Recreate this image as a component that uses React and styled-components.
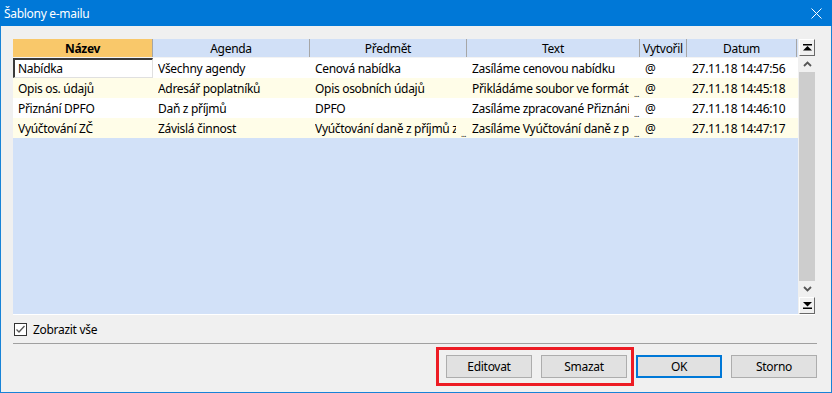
import React from "react";
import styled, { createGlobalStyle } from "styled-components";

const GlobalStyle = createGlobalStyle`
  html, body {
    margin: 0;
    padding: 0;
    background: #f0f0f0;
  }
  body {
    font-family: "Segoe UI", "Noto Sans", "Open Sans", sans-serif;
    font-size: 12px;
    letter-spacing: -0.3px;
    color: #000;
  }
`;

const Window = styled.div`
  width: 832px;
  height: 393px;
  box-sizing: border-box;
  display: flex;
  flex-direction: column;
  background: #f0f0f0;
  border: 1px solid #1883d7;
  border-top: none;
`;

const TitleBar = styled.div`
  height: 26px;
  margin: 0 -1px;
  background: #0078d7;
  color: #fff;
  display: flex;
  align-items: center;
  justify-content: space-between;
  padding: 0 0 0 4px;
  font-size: 12px;
`;

const CloseButton = styled.div`
  width: 32px;
  height: 26px;
  display: flex;
  align-items: center;
  justify-content: center;
`;

const Body = styled.div`
  flex: 1;
  display: flex;
  flex-direction: column;
  padding: 13px 16px 0 12px;
`;

const GridFrame = styled.div`
  height: 275px;
  display: flex;
  gap: 1px;
  border-bottom: 1px solid #fff;
`;

const Table = styled.div`
  flex: 1;
  display: flex;
  flex-direction: column;
  background: #d2e1f8;
`;

const HeaderRow = styled.div`
  display: grid;
  grid-template-columns: ${(p) => p.columns};
  height: 18px;
  border-bottom: 1px solid #f3f3f3;
`;

const HeaderCell = styled.div`
  display: flex;
  align-items: center;
  justify-content: center;
  background: ${(p) => (p.active ? "#f9c86a" : "#d1e0f7")};
  font-weight: ${(p) => (p.active ? 700 : 400)};
  border-right: 1px solid #a6a6a6;
  white-space: nowrap;
  overflow: hidden;
`;

const DataRow = styled.div`
  display: grid;
  grid-template-columns: ${(p) => p.columns};
  height: 20px;
  background: ${(p) => (p.odd ? "#fffde8" : "#ffffff")};
`;

const Cell = styled.div`
  position: relative;
  display: flex;
  align-items: center;
  padding: 0 5px;
  white-space: nowrap;
  overflow: hidden;
  box-sizing: border-box;
  ${(p) =>
    p.focused &&
    `
    border: 1px solid #3a3a3a;
    border-top-width: 2px;
    border-left-width: 2px;
    border-right-color: #e0e0e0;
    border-bottom-color: #e0e0e0;
    padding: 0 3px;
  `}
`;

const Clip = styled.span`
  display: block;
  overflow: hidden;
  width: ${(p) => (p.short ? "calc(100% - 6px)" : "100%")};
`;

const More = styled.span`
  position: absolute;
  right: 1px;
  bottom: 2px;
  font-size: 8px;
  line-height: 5px;
  letter-spacing: -0.5px;
`;

const ScrollBar = styled.div`
  width: 16px;
  display: flex;
  flex-direction: column;
  align-items: center;
  background: #f0f0f0;
`;

const EndButton = styled.div`
  width: 16px;
  height: 17px;
  flex: none;
  box-sizing: border-box;
  display: flex;
  align-items: center;
  justify-content: center;
  background: #f0f0f0;
  border: 1px solid;
  border-color: #fff #696969 #696969 #fff;
`;

const Arrow = styled.div`
  height: 16px;
  width: 16px;
  flex: none;
  display: flex;
  align-items: center;
  justify-content: center;
  background: #f0f0f0;
`;

const Thumb = styled.div`
  flex: 1;
  width: 16px;
  background: #cdcdcd;
`;

const CheckRow = styled.label`
  display: flex;
  align-items: center;
  gap: 6px;
  height: 28px;
  padding-left: 1px;
  border-bottom: 1px solid #a0a0a0;
  margin-right: -2px;
`;

const Box = styled.span`
  width: 13px;
  height: 13px;
  box-sizing: border-box;
  border: 1px solid #333;
  background: #fff;
  display: flex;
  align-items: center;
  justify-content: center;
`;

const Footer = styled.div`
  display: flex;
  justify-content: flex-end;
  align-items: center;
  gap: 9px;
  padding-top: 11px;
  margin-right: -2px;
`;

const Highlight = styled.div`
  display: flex;
  gap: 9px;
  padding: 5px 4px 5px 7px;
  border: 3px solid #ed1c24;
  margin: -8px -7px -8px -10px;
`;

const Button = styled.div`
  width: 86px;
  height: 23px;
  box-sizing: border-box;
  display: flex;
  align-items: center;
  justify-content: center;
  background: #e1e1e1;
  border: ${(p) => (p.primary ? "2px solid #0078d7" : "1px solid #adadad")};
`;

const columns = "140px 157px 157px 173px 47px 110px";

const headers = ["Název", "Agenda", "Předmět", "Text", "Vytvořil", "Datum"];

const rows = [
  ["Nabídka", "Všechny agendy", "Cenová nabídka", "Zasíláme cenovou nabídku", "@", "27.11.18 14:47:56"],
  ["Opis os. údajů", "Adresář poplatníků", "Opis osobních údajů", "Přikládáme soubor ve formátu PDF", "@", "27.11.18 14:45:18"],
  ["Přiznání DPFO", "Daň z příjmů", "DPFO", "Zasíláme zpracované Přiznání k dani", "@", "27.11.18 14:46:10"],
  ["Vyúčtování ZČ", "Závislá činnost", "Vyúčtování daně z příjmů za rok", "Zasíláme Vyúčtování daně z příjmů", "@", "27.11.18 14:47:17"],
];

const truncated = {
  "1-3": true,
  "2-3": true,
  "3-2": true,
  "3-3": true,
};

const TopEndIcon = () => (
  <svg width="9" height="7" viewBox="0 0 9 7">
    <rect x="0" y="0" width="9" height="1.5" fill="#000" />
    <polygon points="4.5,2 9,6.5 0,6.5" fill="#000" />
  </svg>
);

const BottomEndIcon = () => (
  <svg width="9" height="7" viewBox="0 0 9 7">
    <polygon points="0,0 9,0 4.5,4.5" fill="#000" />
    <rect x="0" y="5.5" width="9" height="1.5" fill="#000" />
  </svg>
);

const Chevron = ({ down }) => (
  <svg width="9" height="6" viewBox="0 0 9 6">
    <polyline
      points={down ? "1,1 4.5,4.5 8,1" : "1,5 4.5,1.5 8,5"}
      fill="none"
      stroke="#555"
      strokeWidth="1.8"
    />
  </svg>
);

const App = () => (
  <>
    <GlobalStyle />
    <Window>
      <TitleBar>
        <span>Šablony e-mailu</span>
        <CloseButton>
          <svg width="11" height="11" viewBox="0 0 11 11">
            <path d="M0.5 0.5 L10.5 10.5 M10.5 0.5 L0.5 10.5" stroke="#fff" strokeWidth="1" />
          </svg>
        </CloseButton>
      </TitleBar>
      <Body>
        <GridFrame>
          <Table>
            <HeaderRow columns={columns}>
              {headers.map((h, i) => (
                <HeaderCell key={h} active={i === 0}>
                  {h}
                </HeaderCell>
              ))}
            </HeaderRow>
            {rows.map((r, i) => (
              <DataRow key={i} columns={columns} odd={i % 2 === 1}>
                {r.map((c, j) => {
                  const cut = truncated[`${i}-${j}`];
                  return (
                    <Cell key={j} focused={i === 0 && j === 0}>
                      <Clip short={cut}>{c}</Clip>
                      {cut && <More>...</More>}
                    </Cell>
                  );
                })}
              </DataRow>
            ))}
          </Table>
          <ScrollBar>
            <EndButton>
              <TopEndIcon />
            </EndButton>
            <Arrow>
              <Chevron />
            </Arrow>
            <Thumb />
            <Arrow>
              <Chevron down />
            </Arrow>
            <EndButton>
              <BottomEndIcon />
            </EndButton>
          </ScrollBar>
        </GridFrame>
        <CheckRow>
          <Box>
            <svg width="11" height="11" viewBox="0 0 11 11">
              <polyline points="1.5,5.5 4,8 9.5,2" fill="none" stroke="#555" strokeWidth="1.3" />
            </svg>
          </Box>
          <span>Zobrazit vše</span>
        </CheckRow>
        <Footer>
          <Highlight>
            <Button>Editovat</Button>
            <Button>Smazat</Button>
          </Highlight>
          <Button primary>OK</Button>
          <Button>Storno</Button>
        </Footer>
      </Body>
    </Window>
  </>
);

export default App;
